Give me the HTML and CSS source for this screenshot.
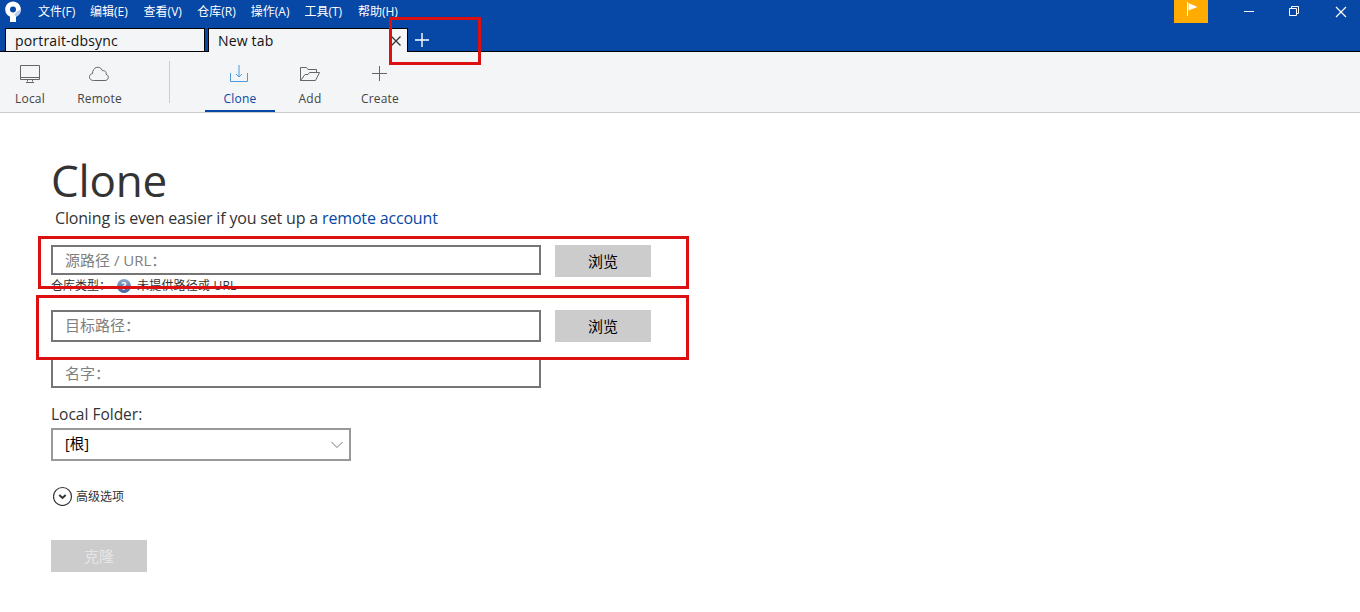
FILE: index.html
```html
<!DOCTYPE html>
<html lang="zh-CN">
<head>
    <meta charset="UTF-8">
    <title>Sourcetree</title>
    <link rel="stylesheet" href="styles.css">
</head>
<body>
    <header class="titlebar">
        <svg class="logo" width="18" height="24" viewBox="0 0 18 24">
            <path d="M9 1.500a7.900 7.900 0 0 0-3 15.200V22h6v-5.300a7.900 7.900 0 0 0-3-15.200z" fill="#fff"/>
            <path d="M12 16.700a7.900 7.900 0 0 0 4.900-7.300l-3.900 2-3 3.500 2 1z" fill="#b9cbe8"/>
            <circle cx="9" cy="9.400" r="3" fill="#0747a6"/>
        </svg>
        <nav class="menu">
            <span>文件(F)</span>
            <span>编辑(E)</span>
            <span>查看(V)</span>
            <span>仓库(R)</span>
            <span>操作(A)</span>
            <span>工具(T)</span>
            <span>帮助(H)</span>
        </nav>
        <div class="window-buttons">
            <span class="flag">
                <svg width="34" height="23" viewBox="0 0 34 23"><path d="M13.500 2v14" stroke="#fff"/><path d="M14.500 3l9 4-9 3.500z" fill="#fff"/></svg>
            </span>
            <svg class="win-icon" width="12" height="24" viewBox="0 0 12 24"><path d="M1 11.500h10" stroke="#fff"/></svg>
            <svg class="win-icon" width="12" height="24" viewBox="0 0 12 24"><path d="M1.500 8.500h7v7h-7zM3.500 8.500v-2h7v7h-2" fill="none" stroke="#fff"/></svg>
            <svg class="win-icon" width="12" height="24" viewBox="0 0 12 24"><path d="M1 7l10 10M11 7L1 17" stroke="#fff" stroke-width="1.200"/></svg>
        </div>
    </header>

    <div class="tabs">
        <div class="tab">portrait-dbsync</div>
        <div class="tab active">
            New tab
            <svg width="10" height="10" viewBox="0 0 10 10"><path d="M.5.5l9 9M9.500.5l-9 9" stroke="#333" stroke-width="1.300"/></svg>
        </div>
        <svg class="new-tab" width="14" height="14" viewBox="0 0 14 14"><path d="M7 0v14M0 7h14" stroke="#fff" stroke-width="1.400"/></svg>
    </div>

    <div class="toolbar">
        <div class="tool local">
            <svg width="22" height="20" viewBox="0 0 22 20"><path d="M1.500 1.500h19v14h-19zM1.500 13.500h19M8.500 15.500v2M13.500 15.500v2M7 18.500h8" fill="none" stroke="#666"/></svg>
            <span>Local</span>
        </div>
        <div class="tool remote">
            <svg width="22" height="20" viewBox="0 0 22 20"><path d="M4.500 16.500C-.7 16.500-.7 10 3.500 9.600c-.2-6.500 7.500-9 10-2.800 3.200-.6 4 1.400 3.500 3.400 3.700 1.300 2.700 6.300-1 6.300z" fill="none" stroke="#666"/></svg>
            <span>Remote</span>
        </div>
        <div class="separator"></div>
        <div class="tool selected">
            <svg width="22" height="20" viewBox="0 0 22 20"><path d="M1.500 9v8.500h17V9M10 1v12M7 10l3 3 3-3" fill="none" stroke="#4a9be0"/></svg>
            <span>Clone</span>
        </div>
        <div class="tool">
            <svg width="22" height="20" viewBox="0 0 22 20"><path d="M1.500 16.500v-13h6l1.500 2h8.500v3M1.500 16.500l4.500-6h3l1.500-2h10l-4 8z" fill="none" stroke="#666"/></svg>
            <span>Add</span>
        </div>
        <div class="tool">
            <svg width="22" height="20" viewBox="0 0 22 20"><path d="M10.500 2v15M3 9.500h15" fill="none" stroke="#666"/></svg>
            <span>Create</span>
        </div>
    </div>

    <main class="content">
        <h1>Clone</h1>
        <p class="hint">Cloning is even easier if you set up a <a>remote account</a></p>

        <div class="row">
            <div class="field source">源路径 / URL：</div>
            <div class="button">浏览</div>
        </div>
        <div class="repo-type">
            <span class="type-label">仓库类型：</span>
            <span class="help">?</span>
            <span>未提供路径或 URL</span>
        </div>
        <div class="row">
            <div class="field target">目标路径：</div>
            <div class="button">浏览</div>
        </div>
        <div class="field name">名字：</div>

        <div class="label">Local Folder:</div>
        <div class="select">
            <span>[根]</span>
            <svg width="14" height="8" viewBox="0 0 14 8"><path d="M1.500 1l5.500 5.500L12.500 1" fill="none" stroke="#777"/></svg>
        </div>

        <div class="advanced">
            <svg width="20" height="20" viewBox="0 0 20 20"><circle cx="9.500" cy="10.500" r="9" fill="none" stroke="#333" stroke-width="1.200"/><path d="M6.300 9l3.200 3 3.200-3" fill="none" stroke="#333" stroke-width="2"/></svg>
            <span>高级选项</span>
        </div>

        <div class="button disabled">克隆</div>
    </main>

    <!-- highlight frames over the steps to follow -->
    <div class="mark mark-tab"></div>
    <div class="mark mark-source"></div>
    <div class="mark mark-target"></div>
</body>
</html>
```
FILE: styles.css
```css
* {
    box-sizing: border-box;
}
body {
    margin: 0;
    height: 612px;
    overflow: hidden;
    position: relative;
    background-color: #fff;
    color: #333;
    font-family: "Open Sans", "Noto Sans CJK SC", sans-serif;
}
svg {
    display: block;
    flex: none;
}

/* Title bar */
.titlebar {
    display: flex;
    height: 28px;
    padding-left: 4px;
    background-color: #0747a6;
    color: #fff;
}
.menu {
    display: flex;
    gap: 14px;
    margin-left: 16px;
    font-size: 12px;
    line-height: 24px;
    white-space: nowrap;
}
.menu span {
    width: 39.600px;
}
.menu span:first-child {
    width: 38px;
}
.window-buttons {
    display: flex;
    margin-left: auto;
    padding-right: 13px;
}
.flag {
    width: 34px;
    height: 23px;
    margin-right: 35px;
    background-color: #ffab00;
}
.win-icon + .win-icon {
    margin-left: 33px;
}
.win-icon:last-child {
    margin-left: 35px;
}

/* Tabs */
.tabs {
    display: flex;
    height: 24px;
    padding-left: 5px;
    gap: 3px;
    background-color: #0747a6;
    box-shadow: inset 0 -1px #000;
}
.tab {
    display: flex;
    align-items: center;
    justify-content: space-between;
    width: 200px;
    height: 24px;
    padding: 2px 6px 0 9px;
    border: 1px solid #000;
    background-color: #f4f5f7;
    color: #111;
    font-size: 14px;
    letter-spacing: 0.170px;
    line-height: 22px;
}
.tab.active {
    padding-top: 0;
    border-bottom: none;
}
.new-tab {
    margin: 5px 0 0 4px;
}

/* Toolbar */
.toolbar {
    display: flex;
    height: 61px;
    background-color: #f4f5f7;
    border-bottom: 1px solid #ccc;
}
.tool {
    display: flex;
    flex-direction: column;
    align-items: center;
    width: 70px;
    padding-top: 12px;
    font-size: 12px;
    line-height: 18px;
    color: #444;
}
.tool span {
    margin-top: 6px;
    letter-spacing: 0.200px;
}
.tool.local {
    width: 60px;
}
.tool.remote {
    width: 79px;
}
.tool.selected {
    color: #0747a6;
    border-bottom: 2px solid #0747a6;
}
.separator {
    width: 1px;
    height: 42px;
    margin: 9px 35px 0 30px;
    background-color: #ccc;
}

/* Clone form */
.content {
    padding: 37px 0 0 51px;
}
h1 {
    margin: 0;
    font-size: 44px;
    font-weight: 400;
    letter-spacing: -0.200px;
    line-height: 60px;
}
.hint {
    margin: -3px 0 0 4px;
    font-size: 16px;
    letter-spacing: -0.170px;
    line-height: 22px;
    height: 38px;
}
.hint a {
    color: #0747a6;
}
.row {
    display: flex;
    gap: 14px;
    height: 32px;
}
.field {
    width: 490px;
    padding-left: 12px;
    border: 2px solid #767676;
    color: #808080;
    font-size: 15px;
}
.source {
    height: 30px;
    line-height: 26px;
}
.target {
    height: 32px;
    line-height: 27px;
}
.name {
    height: 30px;
    margin-top: 16px;
    line-height: 26px;
}
.button {
    width: 96px;
    height: 32px;
    background-color: #ccc;
    color: #000;
    font-size: 15px;
    line-height: 32px;
    text-align: center;
}
.repo-type {
    display: flex;
    align-items: center;
    height: 18px;
    margin-bottom: 15px;
    font-size: 12px;
    line-height: 18px;
}
.repo-type span:last-child {
    letter-spacing: 0.200px;
}
.type-label {
    width: 66px;
}
.help {
    width: 14px;
    height: 14px;
    margin-right: 6px;
    border-radius: 50%;
    background: linear-gradient(#8fa8cd, #44659b);
    color: #fff;
    font-size: 10px;
    font-weight: 700;
    line-height: 14px;
    text-align: center;
}
.label {
    margin-top: 16px;
    height: 24px;
    font-size: 15.500px;
    line-height: 20px;
}
.select {
    display: flex;
    align-items: center;
    justify-content: space-between;
    width: 300px;
    height: 33px;
    padding: 0 5px 0 12px;
    border: 2px solid #999;
    color: #000;
    font-size: 14.500px;
}
.select span {
    line-height: 26px;
    margin-bottom: 1px;
}
.advanced {
    display: flex;
    align-items: center;
    gap: 3px;
    height: 20px;
    margin: 25px 0 34px 2px;
    font-size: 12px;
}
.disabled {
    color: #e6e6e6;
}

/* Highlight frames */
.mark {
    position: absolute;
    border: 3px solid #dc1010;
}
.mark-tab {
    left: 389px;
    top: 17px;
    width: 92px;
    height: 48px;
}
.mark-source {
    left: 38px;
    top: 236px;
    width: 651px;
    height: 53px;
}
.mark-target {
    left: 36px;
    top: 295px;
    width: 653px;
    height: 65px;
}
```
